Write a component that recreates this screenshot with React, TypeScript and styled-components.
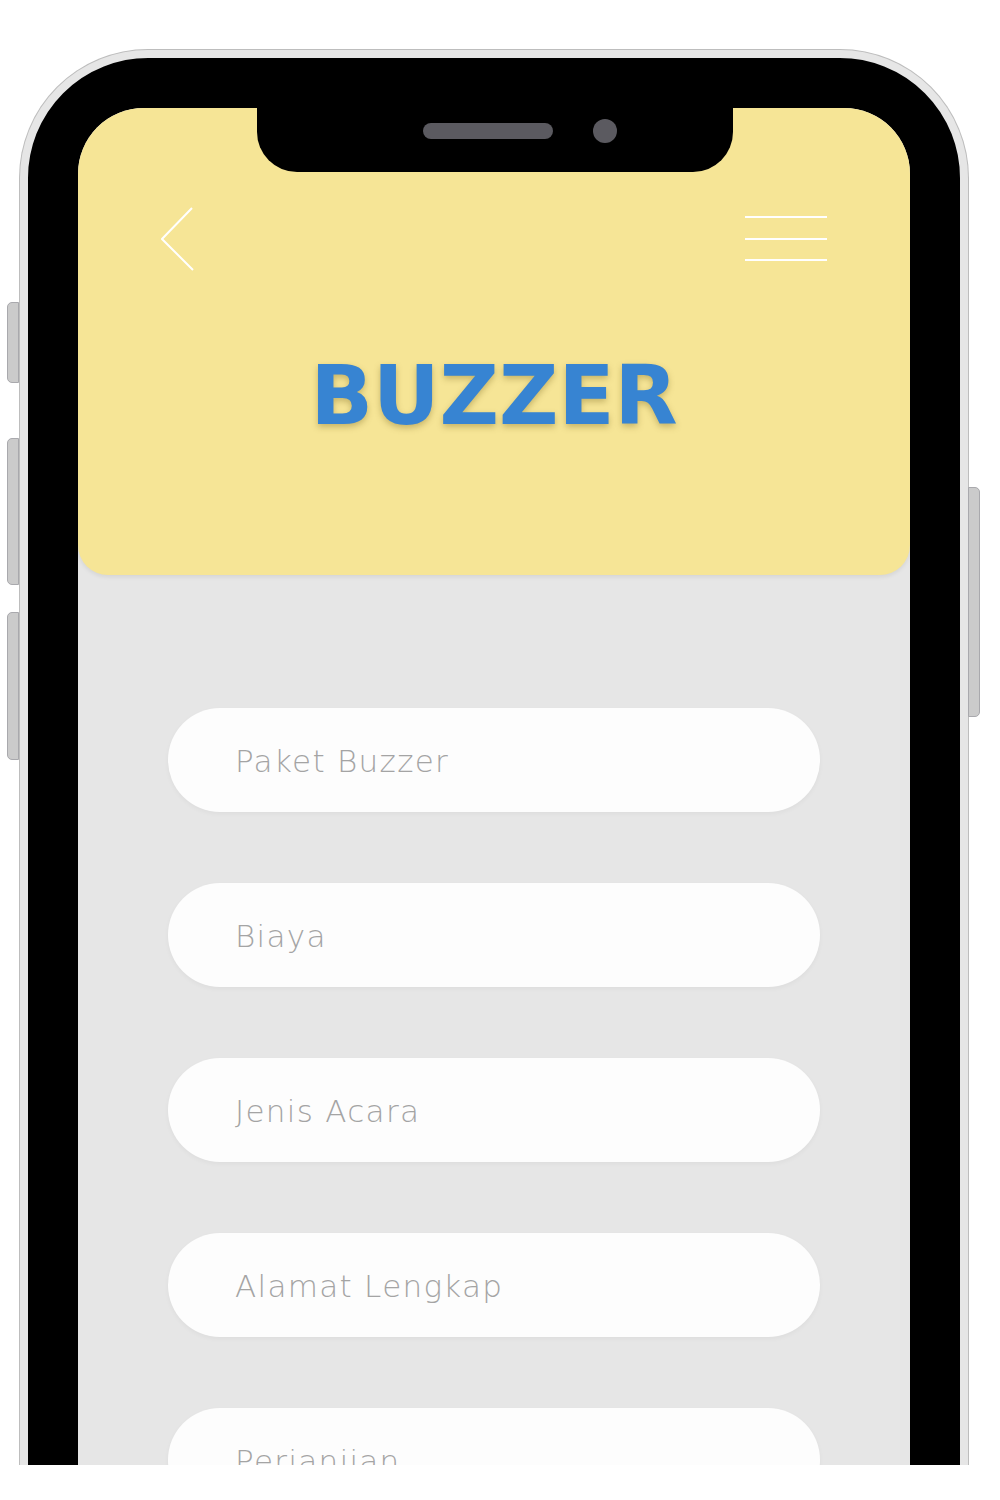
import React from "react";
import styled, { createGlobalStyle } from "styled-components";

const Global = createGlobalStyle`
  html, body { margin: 0; padding: 0; background: #ffffff; }
  * { box-sizing: border-box; }
`;

const Page = styled.div`
  width: 1000px;
  height: 1465px;
  overflow: hidden;
  padding: 50px 0 0 20px;
  background: #ffffff;
`;

const Phone = styled.div`
  position: relative;
  width: 948px;
  height: 1600px;
  border: 8px solid #e6e6e6;
  border-radius: 128px;
  background: #000000;
  padding: 50px;
  box-shadow: 0 0 0 1px #bdbdbd;
`;

const SideButton = styled.div<{ $side: "left" | "right"; $top: number; $h: number }>`
  position: absolute;
  top: ${(p) => p.$top}px;
  height: ${(p) => p.$h}px;
  width: 12px;
  ${(p) => (p.$side === "left" ? "left: -21px;" : "right: -20px;")}
  background: #cbcbcb;
  border: 1px solid #a9a9ad;
  border-radius: ${(p) => (p.$side === "left" ? "5px 0 0 5px" : "0 5px 5px 0")};
`;

const Screen = styled.div`
  position: relative;
  height: 100%;
  border-radius: 66px 66px 0 0;
  overflow: hidden;
  background: #e6e6e6;
  display: flex;
  flex-direction: column;
`;

const Notch = styled.div`
  position: absolute;
  top: 0;
  left: 179px;
  width: 476px;
  height: 64px;
  background: #000000;
  border-radius: 0 0 40px 40px;
  display: flex;
  align-items: center;
  gap: 40px;
  padding: 0 0 18px 166px;
`;

const Speaker = styled.div`
  width: 130px;
  height: 16px;
  border-radius: 8px;
  background: #5b5a60;
`;

const Camera = styled.div`
  width: 24px;
  height: 24px;
  border-radius: 50%;
  background: #5b5a60;
`;

const Header = styled.header`
  height: 467px;
  flex: none;
  background: #f6e596;
  border-radius: 0 0 30px 30px;
  box-shadow: 0 2px 4px rgba(0, 0, 0, 0.08);
  padding: 99px 83px 0 83px;
  display: flex;
  flex-direction: column;
`;

const TopBar = styled.div`
  display: flex;
  justify-content: space-between;
  align-items: center;
  height: 64px;
`;

const IconButton = styled.button`
  background: none;
  border: none;
  padding: 0;
  display: flex;
  cursor: pointer;
`;

const Title = styled.h1`
  margin: 84px 0 0 0;
  text-align: center;
  font-family: "DejaVu Sans", "Noto Sans", sans-serif;
  font-weight: 700;
  font-size: 82px;
  line-height: 1;
  letter-spacing: 0px;
  color: #3784d2;
  text-shadow: 0 3px 6px rgba(110, 90, 20, 0.35);
`;

const Form = styled.div`
  display: flex;
  flex-direction: column;
  gap: 71px;
  padding: 133px 90px 0 90px;
`;

const Field = styled.div`
  height: 104px;
  border-radius: 52px;
  background: #fdfdfd;
  box-shadow: 0 2px 5px rgba(0, 0, 0, 0.04);
  display: flex;
  align-items: center;
  padding: 2px 0 0 67px;
  font-family: "DejaVu Sans", "Noto Sans", sans-serif;
  font-weight: 200;
  font-size: 31px;
  letter-spacing: 1.3px;
  color: #a4a4a4;
`;

const fields = ["Paket Buzzer", "Biaya", "Jenis Acara", "Alamat Lengkap", "Perjanjian"];

export default function App() {
  return (
    <>
      <Global />
      <Page>
        <Phone>
          <SideButton $side="left" $top={244} $h={81} />
          <SideButton $side="left" $top={380} $h={147} />
          <SideButton $side="left" $top={554} $h={148} />
          <SideButton $side="right" $top={429} $h={230} />
          <Screen>
            <Header>
              <TopBar>
                <IconButton aria-label="Back">
                  <svg width="34" height="64" viewBox="0 0 34 64">
                    <polyline
                      points="31,1 1,32 32,63"
                      fill="none"
                      stroke="#ffffff"
                      strokeWidth="2"
                    />
                  </svg>
                </IconButton>
                <IconButton aria-label="Menu">
                  <svg width="82" height="48" viewBox="0 0 82 48">
                    <line x1="0" y1="2" x2="82" y2="2" stroke="#ffffff" strokeWidth="2" />
                    <line x1="0" y1="24" x2="82" y2="24" stroke="#ffffff" strokeWidth="2" />
                    <line x1="0" y1="45" x2="82" y2="45" stroke="#ffffff" strokeWidth="2" />
                  </svg>
                </IconButton>
              </TopBar>
              <Title>BUZZER</Title>
            </Header>
            <Form>
              {fields.map((f) => (
                <Field key={f}>{f}</Field>
              ))}
            </Form>
            <Notch>
              <Speaker />
              <Camera />
            </Notch>
          </Screen>
        </Phone>
      </Page>
    </>
  );
}
